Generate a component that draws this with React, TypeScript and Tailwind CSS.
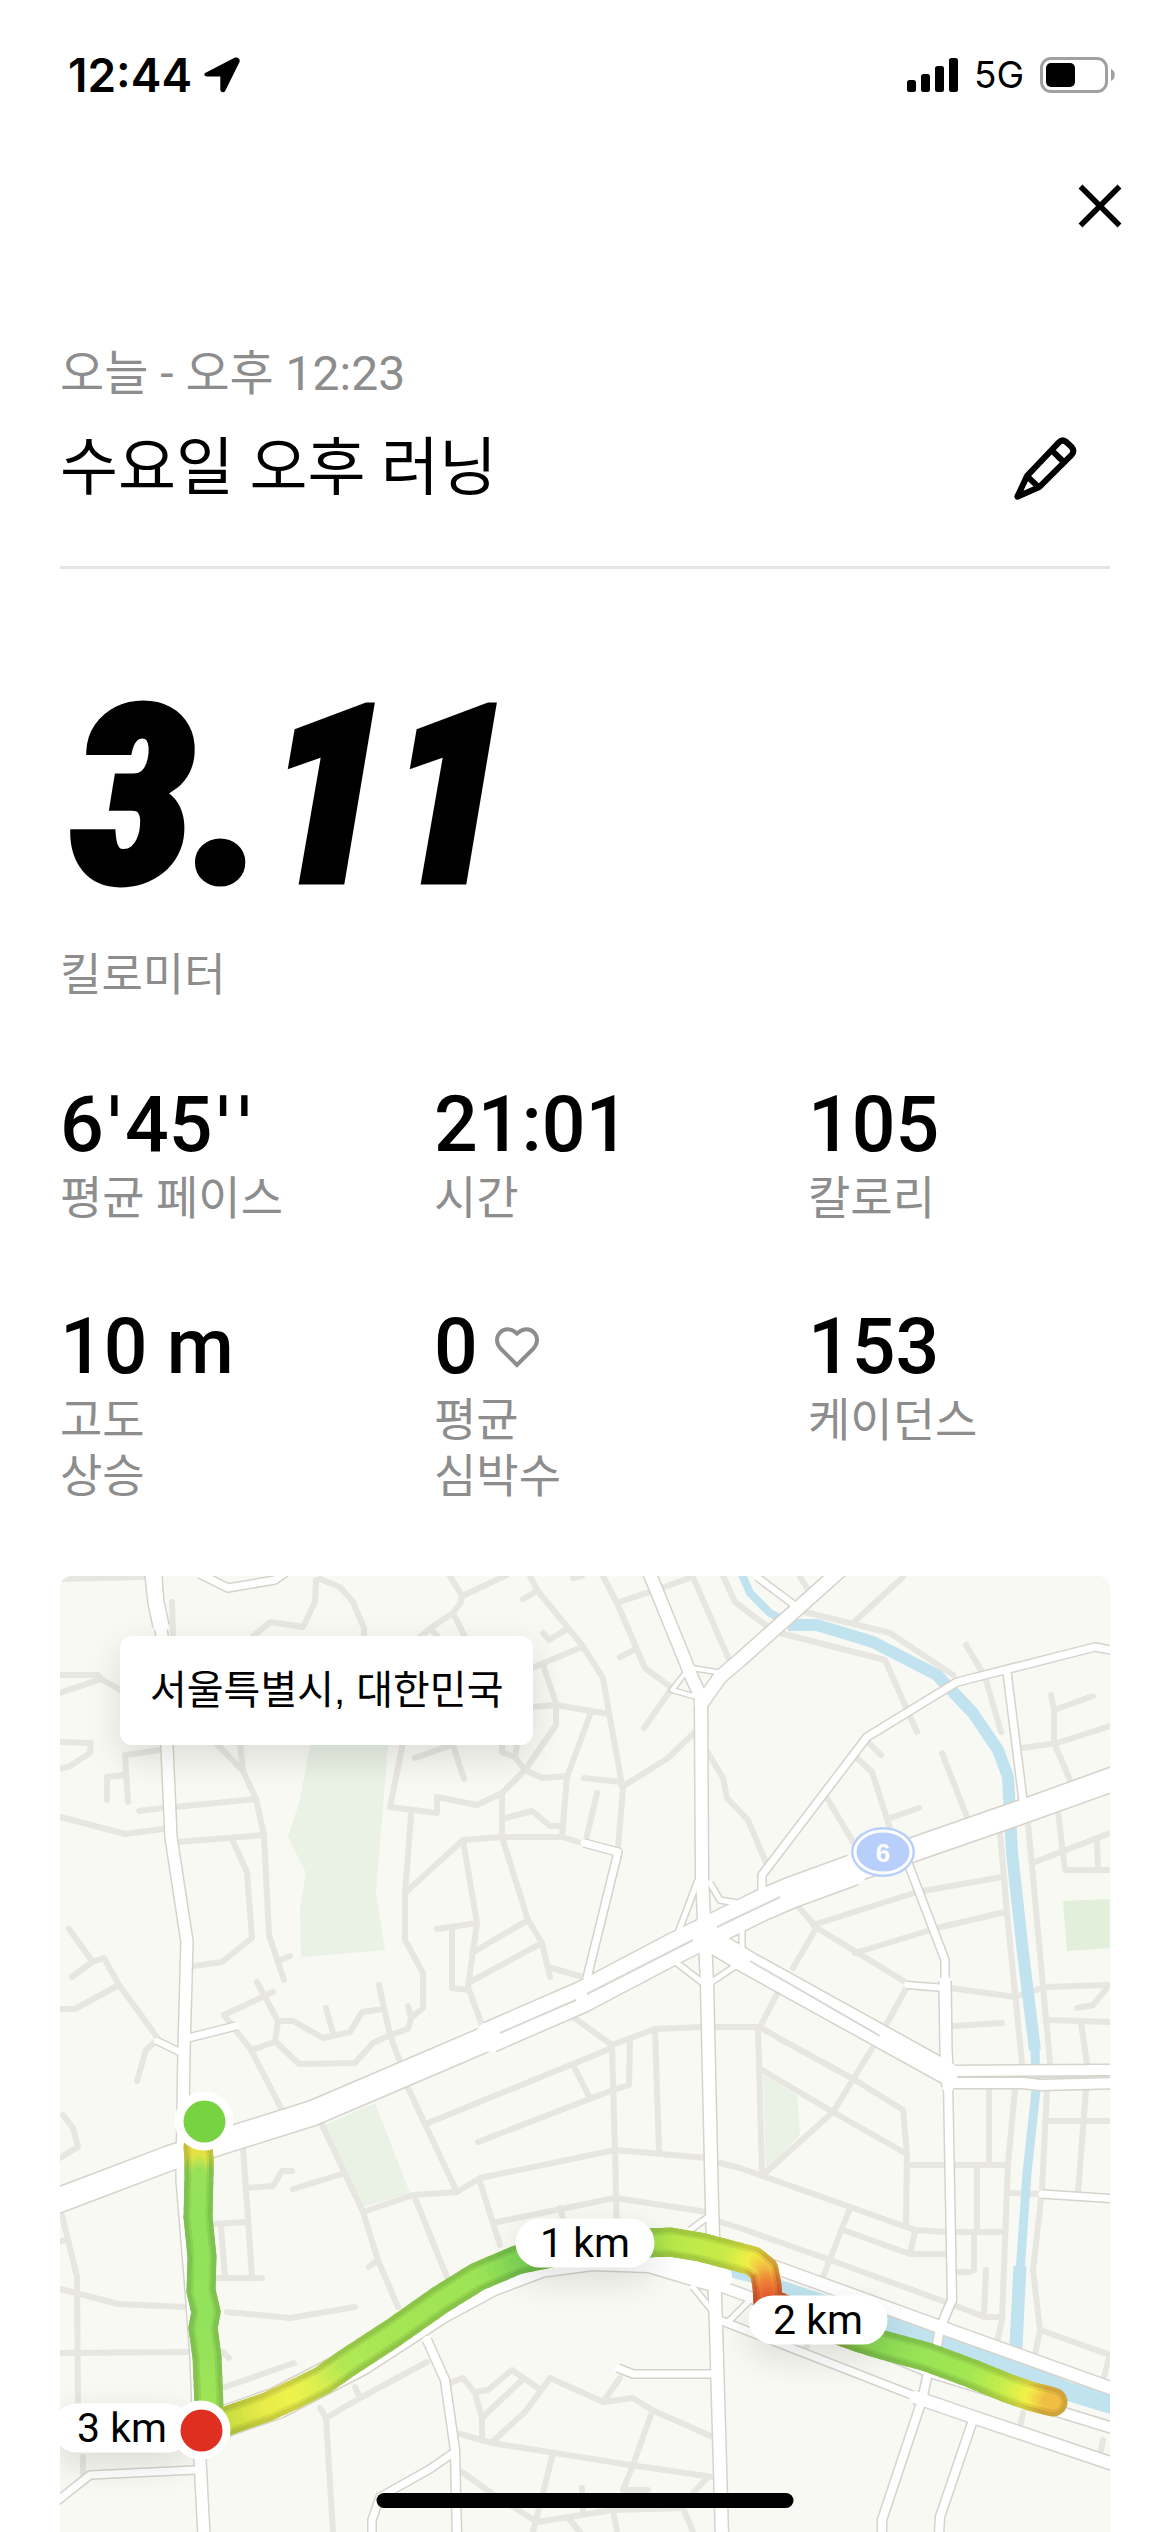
import React from 'react';

interface Stat {
  value: string;
  label: string[];
  heart?: boolean;
}

interface RoutePoint {
  x: number;
  y: number;
  color: [number, number, number];
}

const stats: Stat[] = [
  { value: "6'45''", label: ['평균 페이스'] },
  { value: '21:01', label: ['시간'] },
  { value: '105', label: ['칼로리'] },
  { value: '10 m', label: ['고도', '상승'] },
  { value: '0', label: ['평균', '심박수'], heart: true },
  { value: '153', label: ['케이던스'] },
];

const MAP_WIDTH = 1050;
const MAP_HEIGHT = 956;

const parks = [
  'M250 169L328 169L316 317L325 374L241 381L240 331L246 297L228 261L240 224Z',
  'M265 549L315 527L350 617L303 631Z',
  'M703 499L737 519L740 559L706 594Z',
];

const streets = [
  // north west
  'M0 3L83 1M256 4L255 26L243 51L210 46L190 63M260 3L280 11L293 26L304 52V75M112 26L113 62',
  'M0 99H38L41 103L62 115M0 117L41 103M0 166L31 167L30 177L10 190L0 193',
  'M100 174L65 179L68 226M65 199L47 201V224M79 235L103 232M115 231L196 223',
  'M153 164L183 195L196 223L204 259L209 359L224 404M180 167L183 195M0 241L65 258L103 253',
  'M118 266L204 259M172 263L187 296L192 362L162 386L133 390M220 384L230 380',
  'M9 353L32 385M12 401L32 386L44 382L59 409L97 461M0 433H15L59 409M95 466L86 474L77 505',
  'M197 406L218 445L215 466L191 474M213 416L164 439L191 474L222 534',
  'M217 467L239 488L295 487L313 467L330 459L348 453L351 442L348 430M351 442L363 432V397L345 364V317L351 239',
  'M218 445H233L263 462L290 456L302 436L323 433M266 432L273 457M319 409L330 459L340 486',
  'M343 167L330 231L377 237V221L417 229L442 217L465 194L496 149V129',
  'M345 317L403 264L442 261H502L522 267',
  // north
  'M390 0L402 20L401 26L393 37L372 51L360 61M402 20L447 -1M393 37L405 61M372 54L378 61',
  'M470 0L477 14L522 69L543 102L549 137L563 214L558 271M477 15L463 23M507 53L489 64L483 57',
  'M522 71L472 92M483 89L496 127M472 131L496 129L549 138M531 136L507 201L502 261',
  'M465 194L482 202L507 200M465 194L455 181L442 176V167M455 181L457 169M355 182L392 169M393 169L404 203',
  'M524 202L560 206M537 217L526 264M562 211L608 182L635 156',
  'M442 217V261L468 344L482 367L490 401M488 391L523 401M442 243L472 235L490 250H502',
  'M403 264L417 347L408 411L423 452M377 353L417 347M392 351V412L408 414M468 344L412 377M482 367L408 407',
  'M543 0L557 27L585 92L612 112L584 152M513 2L522 0M557 27L633 1M574 74L560 81M633 1L670 86M663 0L675 26L708 51',
  'M648 177L663 202L667 222L688 244L707 289',
  // north east
  'M720 57L825 84L857 156M745 36L830 57L893 99M793 47L843 1M740 1L750 17M906 69L925 101L941 156',
  'M991 119L994 134V167L1010 204M994 134L1033 120M962 172L997 167L1050 150',
  'M808 166L821 179M797 182L812 196L830 252M830 242L859 232M767 222L793 266M882 177L907 241',
  'M940 256L947 337L962 487M968 247L990 487M753 349L857 316L942 301M795 377L877 352L945 336',
  'M735 327L757 352L847 407M755 354L733 392M718 416L700 451M848 409L825 451',
  'M890 412L955 421L985 411L1050 409M1048 411L1033 429L1017 432M990 444L1050 446M1021 447L1027 487M893 450L942 447',
  'M998 236L1005 294H1050M975 286L1050 257M1037 264L1038 294',
  // centre
  'M513 441L552 469L595 453L642 451M653 451H700L722 464L795 504L843 534L847 577L846 649',
  'M570 462L569 509L553 514L532 522L418 566M595 453L599 574M698 451L702 597',
  'M552 472L555 574L557 660M552 472L368 547M513 489L530 522M348 512L397 616',
  'M303 636L353 619L397 616L420 602L555 574L647 582M355 622L387 701M420 606L440 669',
  'M437 646L555 622L647 636M500 632L505 650M660 587L680 592L855 654L888 656H945',
  'M660 646L680 652L770 684L888 727L925 741H940M702 494L773 536L845 577M813 471L773 536L703 599',
  'M790 632L763 701M783 654L850 678H888M855 656L850 677',
  'M848 589H948M929 512V589M955 514L948 587L942 744L937 766M917 592V656M914 661V694M898 696H910M926 694L924 741',
  'M948 617L980 618M987 514L982 614L973 694L980 754L975 779M988 545H1050M1026 514L1018 616M980 754L1050 779L1043 804',
  // south
  'M0 582L18 571L13 552L3 539M2 639L8 664L17 701L18 829M0 666L8 663M0 713L58 728L125 731M167 736L230 742L295 731',
  'M0 777L128 776M163 776L169 782M165 811L234 787M183 571L192 701M157 702H202M188 612L213 610L222 595H232',
  'M153 648L188 646M161 651L165 701M233 613L282 598M262 549L303 636L318 684L338 731M309 691L318 684',
  'M367 786L300 822L266 842L273 956M295 811L300 822M260 832L266 842M23 881V897',
  'M390 807L403 802L415 817L422 842V864M415 816L428 814L452 794L478 812M462 804L423 841',
  'M432 866L465 836L490 802L543 826L573 822L592 834L653 861M543 826L560 802M592 836L573 889L563 914H588',
  'M397 857L432 867L570 889L653 901M492 881L483 917L473 956M402 896L430 916L477 946L553 934L623 932L633 956',
  'M647 902L633 917M522 912L523 934M553 934L557 956M510 944L520 956M747 770L743 776M963 837L960 851M1043 864L1040 879',
];

// [path, width of the white roadway]
const roads: [string, number][] = [
  ['M96 -2L97 26L102 60L107 171L111 261L127 366L124 474L122 604L130 700L136 780L140 884L144 960', 11],
  ['M93 -2L96 26L101 50', 15],
  ['M140 -2L168 12L215 4L226 -4', 7],
  ['M97 465L120 476', 6],
  ['M128 462L176 450', 7],
  ['M524 267L558 276L527 402', 7],
  ['M589 -4L633 104L641 121L642 301L647 407L652 631L656 751L662 960', 12],
  ['M641 128L660 101L680 84L783 -8', 13],
  ['M630 91L612 114L640 122M632 92L663 97', 4],
  ['M-6 626L110 582L253 537L370 487L440 457', 24],
  ['M430 461L522 421L613 373L700 330L730 317L793 294', 30],
  ['M780 299L967 234L1056 202', 23],
  ['M638 304L618 357M650 307L660 324L677 327M682 351V371M617 387L643 407M677 389L650 407', 5],
  ['M640 358L690 388L887 497', 22],
  ['M887 495L1056 494M887 507H963L980 509L1056 507', 10],
  ['M848 287L885 384V411', 7],
  ['M885 405L886 474L888 511', 11],
  ['M888 505L892 724L880 752L877 769L868 797L862 824L822 944V960', 8],
  ['M847 409L885 412', 6],
  ['M702 314V299L807 161L897 106L1035 71L1056 75M947 96L963 224', 7],
  ['M697 1L737 31', 6],
  ['M982 618L1056 623', 7],
  ['M140 854L217 827L300 784L340 758L380 732L430 705L480 686L533 679L590 681L657 701', 30],
  ['M590 690L657 709L690 721L870 796L1056 853', 10],
  ['M700 686L723 694L880 751L1056 814', 12],
  ['M662 745L857 821', 7],
  ['M855 821L913 841L1056 889', 12],
  ['M633 711L655 738M690 724L667 747', 5],
  ['M630 654L648 641', 5],
  ['M913 844L880 941L879 960', 8],
  ['M367 764L385 804L395 874L397 960', 8],
  ['M393 877L370 893L320 921L312 944V960', 7],
  ['M558 792L573 798H656', 7],
  ['M135 894L30 899L-4 926', 7],
];

const routes: RoutePoint[][] = [
  [
    { x: 138, y: 571, color: [238, 214, 66] },
    { x: 139, y: 583, color: [226, 228, 70] },
    { x: 139, y: 599, color: [152, 226, 90] },
    { x: 138, y: 641, color: [146, 226, 92] },
    { x: 142, y: 681, color: [146, 226, 92] },
    { x: 141, y: 715, color: [148, 226, 92] },
    { x: 146, y: 736, color: [148, 226, 92] },
    { x: 143, y: 752, color: [148, 226, 92] },
    { x: 147, y: 781, color: [152, 226, 90] },
    { x: 149, y: 830, color: [160, 228, 86] },
  ],
  [
    { x: 150, y: 851, color: [190, 216, 64] },
    { x: 178, y: 841, color: [206, 224, 66] },
    { x: 207, y: 831, color: [232, 236, 72] },
    { x: 233, y: 819, color: [240, 242, 76] },
    { x: 263, y: 804, color: [214, 238, 80] },
    { x: 287, y: 787, color: [176, 232, 84] },
    { x: 333, y: 757, color: [166, 230, 84] },
    { x: 380, y: 724, color: [160, 228, 84] },
    { x: 417, y: 701, color: [156, 228, 86] },
    { x: 457, y: 684, color: [130, 216, 86] },
    { x: 520, y: 671, color: [130, 210, 84] },
    { x: 588, y: 667, color: [146, 216, 80] },
    { x: 610, y: 666, color: [180, 230, 74] },
    { x: 640, y: 671, color: [192, 234, 74] },
    { x: 667, y: 678, color: [200, 234, 72] },
    { x: 693, y: 685, color: [240, 240, 70] },
    { x: 704, y: 694, color: [242, 196, 66] },
    { x: 707, y: 710, color: [240, 130, 56] },
    { x: 708, y: 726, color: [232, 92, 48] },
    { x: 735, y: 738, color: [222, 110, 50] },
    { x: 797, y: 761, color: [140, 212, 80] },
    { x: 823, y: 769, color: [142, 220, 86] },
    { x: 867, y: 781, color: [154, 228, 86] },
    { x: 913, y: 798, color: [164, 230, 82] },
    { x: 947, y: 812, color: [200, 238, 76] },
    { x: 970, y: 820, color: [244, 240, 74] },
    { x: 993, y: 826, color: [240, 178, 66] },
  ],
];

const STEPS = 5;

// Splits a route into short strokes so that its colour can change along the way.
const toStrokes = (points: RoutePoint[], shade: number) => {
  const strokes: { d: string; stroke: string }[] = [];
  for (let i = 0; i < points.length - 1; i++) {
    const a = points[i];
    const b = points[i + 1];
    for (let s = 0; s < STEPS; s++) {
      const from = s / STEPS;
      const to = (s + 1) / STEPS;
      const mix = (p: number, q: number, t: number) => p + (q - p) * t;
      const rgb = a.color.map((c, n) => Math.round(mix(c, b.color[n], from) * shade));
      strokes.push({
        d: `M${mix(a.x, b.x, from)} ${mix(a.y, b.y, from)}L${mix(a.x, b.x, to)} ${mix(a.y, b.y, to)}`,
        stroke: `rgb(${rgb.join(',')})`,
      });
    }
  }
  return strokes;
};

const RouteLayer: React.FC<{ width: number; shade: number }> = ({ width, shade }) => (
  <g strokeWidth={width} strokeLinecap="round">
    {routes.flatMap((points) => toStrokes(points, shade)).map((s, i) => (
      <path key={i} d={s.d} stroke={s.stroke} />
    ))}
  </g>
);

const kmLabels = [
  { text: '1 km', x: 525, y: 667 },
  { text: '2 km', x: 758, y: 744 },
  { text: '3 km', x: 62, y: 852 },
];

const endPoints = [
  { name: '출발', x: 144, y: 545, className: 'bg-[#77d341]' },
  { name: '도착', x: 141, y: 854, className: 'bg-[#df2f20]' },
];

const place = (x: number, y: number) => ({
  left: `${(x / MAP_WIDTH) * 100}%`,
  top: `${(y / MAP_HEIGHT) * 100}%`,
});

const RouteMap: React.FC = () => (
  <section className="relative w-full overflow-hidden rounded-t-xl bg-[#f8f9f3]">
    <svg viewBox={`0 0 ${MAP_WIDTH} ${MAP_HEIGHT}`} className="block w-full" fill="none" aria-hidden="true">
      {parks.map((d) => (
        <path key={d} d={d} fill="#eaf1e5" />
      ))}
      <path d="M1003 325L1050 323V372L1007 375Z" fill="#e2efda" />

      <g stroke="#e7e6e1" strokeWidth={6} strokeLinecap="round" strokeLinejoin="round">
        {streets.map((d) => (
          <path key={d} d={d} />
        ))}
      </g>

      <g stroke="#c0e3ef" strokeLinejoin="round">
        <path d="M681 -4L690 17L710 37L733 49" strokeWidth={8} />
        <path d="M728 49L757 49L813 66L877 99L913 137L938 174L948 201L952 277L963 377L975 474" strokeWidth={12} />
        <path d="M975 470L976 514L967 597L960 697L955 775" strokeWidth={9} />
        <path d="M960 690L955 790" strokeWidth={13} />
        <path d="M633 688L705 706" strokeWidth={8} />
        <path d="M712 711L877 766L930 784L1007 815L1056 830" strokeWidth={19} />
      </g>

      <g stroke="#d6d3cc" strokeLinejoin="round">
        {roads.map(([d, width]) => (
          <path key={d} d={d} strokeWidth={width + 3} />
        ))}
      </g>
      <g stroke="#ffffff" strokeLinecap="round" strokeLinejoin="round">
        {roads.map(([d, width]) => (
          <path key={d} d={d} strokeWidth={width} />
        ))}
      </g>
      <path d="M440 457L516 424M527 418L633 364M657 351L720 321M690 385L820 460M968 501H1050" stroke="#dad8d3" strokeWidth={2} />

      <ellipse cx={823} cy={276} rx={32} ry={25} fill="#b9cffb" />
      <ellipse cx={823} cy={276} rx={28} ry={21} stroke="#ffffff" strokeWidth={3} />
      <text
        x={823}
        y={286}
        textAnchor="middle"
        fill="#ffffff"
        className="font-['Liberation_Sans',sans-serif] text-[26px] font-bold"
      >
        6
      </text>

      <RouteLayer width={29} shade={0.86} />
      <RouteLayer width={20} shade={0.93} />
      <RouteLayer width={15} shade={1} />
    </svg>

    {kmLabels.map((label) => (
      <span
        key={label.text}
        style={place(label.x, label.y)}
        className="absolute flex h-[49px] w-[139px] -translate-x-1/2 -translate-y-1/2 items-center justify-center rounded-full bg-white text-[41px] leading-none shadow-[0_12px_36px_rgba(0,0,0,0.12)]"
      >
        {label.text}
      </span>
    ))}
    {endPoints.map((point) => (
      <span
        key={point.name}
        role="img"
        aria-label={point.name}
        style={place(point.x, point.y)}
        className="absolute flex size-[59px] -translate-x-1/2 -translate-y-1/2 items-center justify-center rounded-full bg-white"
      >
        <span className={`size-[42px] rounded-full ${point.className}`} />
      </span>
    ))}
    <p className="absolute top-[60px] left-[60px] rounded-xl bg-white px-[30px] font-['Liberation_Sans','Noto_Sans_CJK_KR',sans-serif] text-[40px] leading-[109px] shadow-[0_12px_36px_rgba(0,0,0,0.12)]">
      서울특별시, 대한민국
    </p>
  </section>
);

const StatusBar: React.FC = () => (
  <div className="flex h-[150px] items-center justify-between pr-[54px] pl-[68px]">
    <div className="flex items-center gap-3">
      <span className="font-['Inter',sans-serif] text-[46px] font-semibold">12:44</span>
      <svg viewBox="0 0 36 36" className="size-9" aria-hidden="true">
        <path
          d="M2.600 15.300L30.500.800C33.600-.700 36.700 2.200 35.400 5.300L21.300 33.700C20.200 36.200 16.400 35.600 16.300 32.500V19.600L3.300 19.500C-.200 19.300-.900 16.700 2.600 15.300Z"
          fill="#000000"
        />
      </svg>
    </div>
    <div className="flex items-center">
      <svg viewBox="0 0 51 34" className="h-[34px] w-[51px]" aria-hidden="true">
        <rect x="0" y="22" width="9" height="12" rx="2.500" />
        <rect x="14" y="16" width="9" height="18" rx="2.500" />
        <rect x="28" y="8" width="9" height="26" rx="2.500" />
        <rect x="42" y="0" width="9" height="34" rx="2.500" />
      </svg>
      <span className="ml-4 font-['Inter',sans-serif] text-[37px]">5G</span>
      <svg viewBox="0 0 76 36" className="ml-4 h-9 w-[76px]" aria-hidden="true">
        <rect x="1.500" y="1.500" width="65" height="33" rx="9.500" fill="none" stroke="#a0a0a0" strokeWidth="3" />
        <rect x="6" y="6" width="29" height="24" rx="5" />
        <path d="M71 12C76 13.500 76 22.500 71 24Z" fill="#a0a0a0" />
      </svg>
    </div>
  </div>
);

// Roboto's prime marks are narrow, so they are set in a wider face.
const StatValue: React.FC<{ value: string }> = ({ value }) => (
  <span>
    {value.split(/('+)/).map((part, i) =>
      part.startsWith("'") ? (
        <span key={i} className="font-['DejaVu_Sans',sans-serif]">
          {part}
        </span>
      ) : (
        part
      ),
    )}
  </span>
);

const App: React.FC = () => {
  return (
    <div className="relative bg-white font-['Roboto','Noto_Sans_CJK_KR',sans-serif] text-black">
      <StatusBar />

      <div className="flex h-28 items-center justify-end pr-[48px]">
        <button type="button" aria-label="닫기">
          <svg viewBox="0 0 44 44" className="size-11" fill="none" stroke="currentColor" strokeWidth="5.500">
            <path d="M2.500 2.500L41.500 41.500M41.500 2.500L2.500 41.500" />
          </svg>
        </button>
      </div>

      <main className="px-[60px]">
        <header className="mt-20 border-b-[3px] border-[#e5e5e5] pb-15">
          <p className="text-[48px] leading-[64px] text-[#8d8d8d]">오늘 - 오후 12:23</p>
          <div className="mt-6 flex items-center justify-between pr-[33px]">
            <h1 className="text-[63px] leading-[76px]">수요일 오후 러닝</h1>
            <button type="button" aria-label="이름 수정">
              <svg
                viewBox="72 50 188 188"
                className="size-[63px]"
                fill="none"
                stroke="currentColor"
                strokeWidth="18"
                strokeLinejoin="round"
              >
                <path d="M82 228L111 166L206 66Q216 56 227 64L244 80Q254 92 244 103L148 199Z" />
                <path d="M184 89L225 129M110 166L147 201" />
              </svg>
            </button>
          </div>
        </header>

        <p className="mt-32 pl-3 font-['Roboto_Condensed','Roboto',sans-serif] text-[246px] leading-[200px] font-black italic [-webkit-text-stroke:7px_black]">
          3.11
        </p>
        <p className="mt-[51px] text-[45px] leading-[56px] text-[#8d8d8d]">킬로미터</p>

        <dl className="mt-[81px] grid grid-cols-3 gap-x-[72px] gap-y-[81px]">
          {stats.map((stat) => (
            <div key={stat.value} className="flex flex-col-reverse justify-end gap-[5px]">
              <dt className="text-[46px] leading-[56px] text-[#8d8d8d]">
                {stat.label.map((line) => (
                  <span key={line} className="block">
                    {line}
                  </span>
                ))}
              </dt>
              <dd className="flex h-20 items-center gap-4 text-[77px] leading-[80px] font-medium">
                <StatValue value={stat.value} />
                {stat.heart && (
                  <svg viewBox="0 0 46 44" className="h-11 w-[46px]" fill="none" stroke="#8d8d8d" strokeWidth="4" aria-hidden="true">
                    <path d="M23 40L6.500 23.500C-3.500 12.500 10-3.500 23 8.500C36-3.500 49.500 12.500 39.500 23.500Z" />
                  </svg>
                )}
              </dd>
            </div>
          ))}
        </dl>

        <div className="mt-18">
          <RouteMap />
        </div>
      </main>

      <div className="absolute bottom-6 left-1/2 h-[15px] w-[417px] -translate-x-1/2 rounded-full bg-black" />
    </div>
  );
};

export default App;
